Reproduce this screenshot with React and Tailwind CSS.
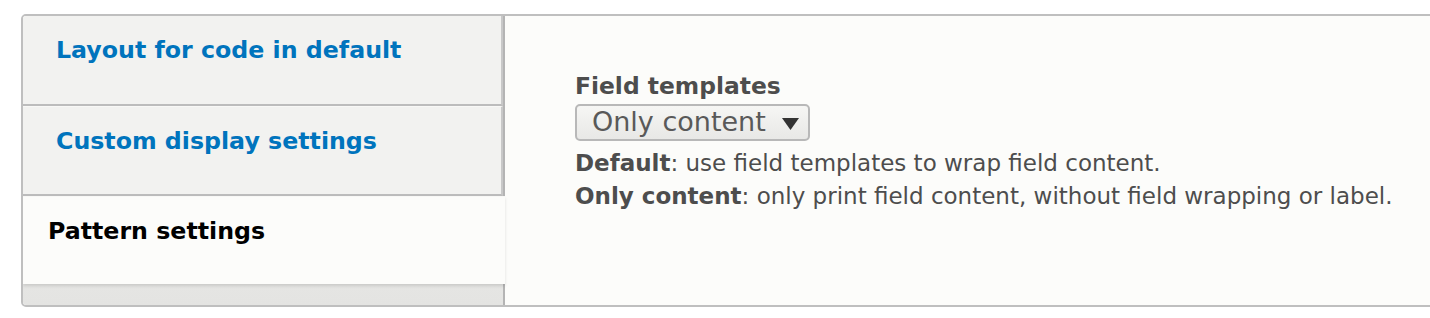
const tabs = [
  { label: 'Layout for code in default', selected: false },
  { label: 'Custom display settings', selected: false },
  { label: 'Pattern settings', selected: true },
]

function Tab({ label, selected }) {
  if (selected) {
    return (
      <li className="h-[88px] -mr-[2px] bg-[#fcfcfa] pl-[25px] pt-[17px] shadow-[0_2px_3px_rgba(0,0,0,0.12)] relative">
        <span className="text-[23.7px] font-bold text-[#000]">{label}</span>
      </li>
    )
  }
  return (
    <li className="h-[90px] border-b-2 border-b-[#bcbcbc] border-r-2 border-r-[#c8c8c8] bg-[#f2f2f0] pl-[33px] pt-[17px] [&+li]:border-t [&+li]:border-t-[#f8f8f6]">
      <span className="text-[23.7px] font-bold text-[#0074bd]">{label}</span>
    </li>
  )
}

export default function App() {
  return (
    <div className="w-[1430px] h-[318px] overflow-hidden bg-white pt-[14px] pl-[21px] font-['DejaVu_Sans',sans-serif]">
      <div className="w-[1440px] h-[293px] flex border-2 border-[#bfbfbf] rounded-[5px] overflow-hidden">
        <ul className="w-[482px] shrink-0 flex flex-col border-r-2 border-[#b4b4b4] bg-gradient-to-b from-[#f2f2f0] to-[#e4e4e2]">
          {tabs.map((t) => (
            <Tab key={t.label} {...t} />
          ))}
        </ul>
        <div className="flex-1 bg-[#fcfcfa] pl-[70px] pt-[54px] text-[#4d4d4d]">
          <div className="text-[23.4px] font-bold leading-[32px]">Field templates</div>
          <div className="mt-[2px] inline-flex items-center h-[37px] pl-[15px] pr-[9px] gap-[16px] border-2 border-[#b8b8b8] rounded-[5px] bg-gradient-to-b from-[#f6f6f4] to-[#e8e8e6] text-[27px] text-[#595959]">
            <span>Only content</span>
            <svg width="17" height="12" viewBox="0 0 17 12" className="mt-[2px]">
              <path d="M0 0h17L8.5 12z" fill="#333" />
            </svg>
          </div>
          <div className="mt-[6px] text-[23px] leading-[33px]">
            <div><b>Default</b>: use field templates to wrap field content.</div>
            <div><b>Only content</b>: only print field content, without field wrapping or label.</div>
          </div>
        </div>
      </div>
    </div>
  )
}
